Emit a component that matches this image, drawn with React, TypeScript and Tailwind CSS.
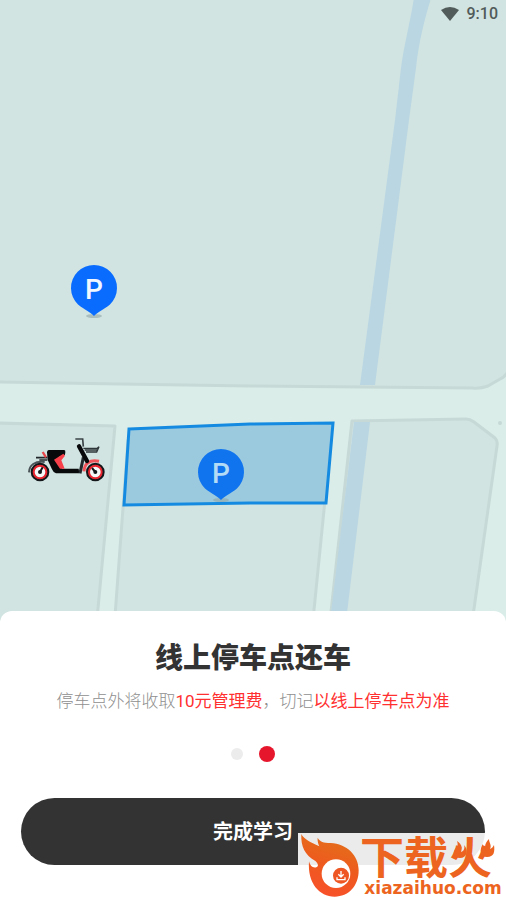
import { useState } from 'react';

interface PinProps {
  x: number;
  y: number;
  faded?: boolean;
}

const steps = ['步骤一', '线上停车点还车'];

function ParkingPin({ x, y, faded = false }: PinProps) {
  return (
    <g transform={`translate(${x} ${y})`}>
      <ellipse cx="0" cy="28" rx="8" ry="2" fill="#8fa5a8" opacity="0.6" />
      <path
        d="M0 28 C-4 24 -9 22 -16 16.500 A23 23 0 1 1 16 16.500 C9 22 4 24 0 28 Z"
        fill={faded ? '#1074ef' : '#0a6cff'}
      />
      <text
        x="0"
        y="11"
        textAnchor="middle"
        className="font-['Roboto',sans-serif] text-[28px] font-medium"
        fill={faded ? '#b4dbf5' : '#f2f8ff'}
      >
        P
      </text>
    </g>
  );
}

function Scooter() {
  return (
    <svg x="27" y="436" width="80" height="47" viewBox="81 228 240 141" fill="none">
      {/* Rear rack and fender */}
      <path d="M87 337 C88 315 104 303 134 306" stroke="#4a5358" strokeWidth="6" />
      <path d="M97 325 C105 312 115 310 130 310" stroke="#8b9698" strokeWidth="3" />
      <path d="M108 293 H142 M118 300 H142" stroke="#23272b" strokeWidth="5" />
      <path d="M128 276 L138 292" stroke="#e8484c" strokeWidth="7" />
      {/* Wheels */}
      {[120, 286].map((cx) => (
        <g key={cx}>
          <circle cx={cx} cy="336" r="24" fill="#f4f8f8" stroke="#15181b" strokeWidth="8" />
          <circle cx={cx} cy="336" r="19" stroke="#e8242f" strokeWidth="6" />
          <circle cx={cx} cy="336" r="6" fill="#15181b" />
        </g>
      ))}
      <path d="M120 336 L128 322 M286 336 L276 324" stroke="#15181b" strokeWidth="6" />
      {/* Front fender */}
      <path d="M252 334 C253 312 268 298 297 304" stroke="#f2545b" strokeWidth="9" />
      {/* Seat and body */}
      <path
        d="M146 270 H192 Q197 270 196 277 L195 284 L178 290 L168 304 L186 326 H236 L238 340 H168 Q160 338 156 328 L143 300 L141 277 Q141 271 146 270 Z"
        fill="#08090b"
      />
      <path d="M190 281 L195 287 L184 301 L194 326 H180 L162 299 Z" fill="#f7404a" />
      <path d="M240 340 L250 292" stroke="#23282c" strokeWidth="9" />
      <path d="M237 259 L261 303" stroke="#08090b" strokeWidth="13" strokeLinecap="round" />
      <path d="M226 237 H248 L250 260" stroke="#3b4347" strokeWidth="5" />
      {/* Basket */}
      <path d="M250 265 H292 L297 260 L290 276 H258 M254 270 H291" stroke="#2f363a" strokeWidth="4" />
    </svg>
  );
}

function ParkingMap() {
  return (
    <svg
      viewBox="0 0 506 624"
      preserveAspectRatio="xMidYMin slice"
      className="absolute inset-0 h-full w-full"
      role="img"
      aria-label="停车点地图"
    >
      <rect width="506" height="624" fill="#daede9" />
      <g fill="#d1e4e1" stroke="#c6d9d6" strokeWidth="3" strokeLinejoin="round">
        <path d="M-5 -5 H511 V366 Q506 377 500 379 L488 386 Q480 389 472 388 L250 386 L120 384 L-5 382 Z" />
        <path d="M-5 423 L115 426 L96 630 H-5 Z" />
        <path d="M128 440 L114 630 H312 L331 440 Z" />
        <path d="M352 421 L466 419 Q470 419 474 422 L495 438 Q498 441 497 446 L471 630 H329 Z" />
      </g>
      {/* River */}
      <path d="M414 -2 H431 C425 18 419 40 416 68 L409 120 L375 385 H360 L395 120 L401 68 C404 45 409 28 414 -2 Z" fill="#bad6e3" />
      <path d="M354 422 H370 L345 630 H329 Z" fill="#bad6e3" />
      <circle cx="500" cy="423" r="2" fill="#c6d9d6" />
      {/* Allowed parking zone */}
      <path
        d="M129 429 L250 424 L333 423 L326 503 L250 503 L124 505 Z"
        fill="#9bcadf"
        stroke="#148be0"
        strokeWidth="3"
      />
      <ParkingPin x={94} y={288} />
      <ParkingPin x={221} y={472} faded />
      <Scooter />
    </svg>
  );
}

function StatusBar() {
  return (
    <div className="relative flex h-7 items-center justify-end gap-2 px-2 text-[#515b5a]">
      <svg width="18" height="14" viewBox="0 0 18 14" aria-hidden="true">
        <path d="M0 3 Q9 -3 18 3 L9 14 Z" fill="currentColor" />
      </svg>
      <span className="font-['Roboto',sans-serif] text-base leading-7 font-medium">9:10</span>
    </div>
  );
}

function FlameLogo() {
  return (
    <svg width="62" height="67" viewBox="24 39 186 201" className="shrink-0" aria-hidden="true">
      <defs>
        <linearGradient id="flame" x1="0.6" y1="0" x2="0.3" y2="1">
          <stop offset="0" stopColor="#e2711a" />
          <stop offset="0.5" stopColor="#ee5a1e" />
          <stop offset="1" stopColor="#f9502b" />
        </linearGradient>
      </defs>
      <path
        d="M34 42 C42 58 60 66 88 79 C84 70 82 62 83 53 C90 66 100 68 122 69 C170 72 206 105 206 151 C206 198 176 230 134 230 C88 230 52 190 57 124 C60 137 68 145 79 142 C88 138 83 128 75 122 C45 105 32 80 34 42 Z"
        fill="url(#flame)"
      />
      <circle cx="138" cy="161" r="43" fill="#fff" />
      <circle cx="153" cy="167" r="24" fill="#ee5723" />
      <path
        d="M153 153 V169 M145 163 L153 171 L161 163 M141 172 V179 H165 V172"
        fill="none"
        stroke="#fff"
        strokeWidth="4"
      />
    </svg>
  );
}

function Watermark() {
  return (
    <div className="pointer-events-none absolute right-0 bottom-0 flex h-[67px] w-52 bg-white/90 text-[#ec6420]">
      <FlameLogo />
      <div className="relative flex-1">
        <div className="font-['Noto_Sans_CJK_SC',sans-serif] text-[44px] leading-11 font-bold whitespace-nowrap">
          下载火
        </div>
        <div className="text-center font-['DejaVu_Sans',sans-serif] text-[17px] leading-[23px] font-bold">
          xiazaihuo.com
        </div>
        {/* Small flames on both sides of the last character */}
        <svg
          width="44"
          height="22"
          viewBox="0 0 44 22"
          className="absolute top-1 left-[92px]"
          aria-hidden="true"
        >
          <path d="M5 4 C11 8 10 12 9 15 C12 14 13 11 12 8 C17 13 15 21 8 21 C1 21 0 15 4 11 C6 9 6 7 5 4 Z" fill="currentColor" />
          <path d="M37 2 C32 7 33 10 34 13 C31 12 31 9 31 7 C27 12 28 20 35 20 C42 20 43 15 42 8 C41 10 40 11 38 12 C40 8 37 6 37 2 Z" fill="currentColor" />
        </svg>
      </div>
    </div>
  );
}

export default function App() {
  const [step, setStep] = useState(1);

  return (
    <main className="relative flex min-h-screen flex-col bg-white font-['Roboto','Noto_Sans_CJK_SC',sans-serif]">
      <section className="relative flex-1 overflow-hidden bg-[#daede9]">
        <ParkingMap />
        <StatusBar />
      </section>

      {/* Bottom sheet */}
      <section className="relative -mt-3 flex flex-col items-center rounded-t-xl bg-white px-[21px] pt-[30px] pb-[35px]">
        <h1 className="text-[28px] leading-9 font-black text-[#333333]">线上停车点还车</h1>
        <p className="mt-3 text-[17px] leading-6 font-light whitespace-nowrap text-[#8f8f8f]">
          停车点外将收取
          <span className="font-normal text-[#ff3030]">10元管理费</span>
          ，切记
          <span className="font-normal text-[#ff3030]">以线上停车点为准</span>
        </p>

        <div className="mt-[33px] flex h-4 items-center gap-4">
          {steps.map((label, index) => (
            <button
              key={label}
              type="button"
              aria-label={label}
              onClick={() => setStep(index)}
              className={
                index === step
                  ? 'h-4 w-4 rounded-full bg-[#e6162d]'
                  : 'h-3 w-3 rounded-full bg-[#ececec]'
              }
            />
          ))}
        </div>

        <button
          type="button"
          className="mt-9 h-[67px] w-full rounded-full bg-[#333333] text-xl font-bold text-white"
        >
          完成学习
        </button>
      </section>

      <Watermark />
    </main>
  );
}
